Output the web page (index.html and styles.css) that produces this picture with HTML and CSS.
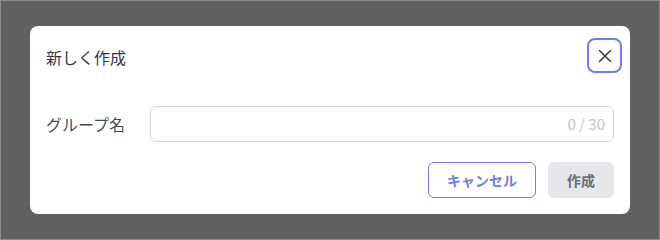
FILE: index.html
```html
<!DOCTYPE html>
<html lang="ja">
<head>
<meta charset="utf-8">
<link rel="stylesheet" href="styles.css">
</head>
<body>
<div class="overlay">
  <div class="dialog">
    <div class="header">
      <h2 class="title">新しく作成</h2>
      <button class="close" aria-label="閉じる">
        <svg width="14" height="14" viewBox="0 0 14 14"><path d="M1.5 1.5 L12.5 12.5 M12.5 1.5 L1.5 12.5" stroke="#3b404a" stroke-width="1.6" stroke-linecap="round" fill="none"/></svg>
      </button>
    </div>
    <div class="row">
      <label class="label">グループ名</label>
      <div class="field">
        <input class="input" type="text">
        <span class="count">0 / 30</span>
      </div>
    </div>
    <div class="actions">
      <button class="btn btn-outline">キャンセル</button>
      <button class="btn btn-disabled">作成</button>
    </div>
  </div>
</div>
</body>
</html>
```
FILE: styles.css
```css
html, body {
  margin: 0;
  padding: 0;
}
body {
  font-family: "Noto Sans CJK JP", "Noto Sans", sans-serif;
}
.overlay {
  height: 240px;
  box-sizing: border-box;
  border: 1px solid #8c8c8c;
  background: #606161;
  padding: 25px 29px;
}
.dialog {
  width: 600px;
  height: 188px;
  box-sizing: border-box;
  background: #fff;
  border-radius: 8px;
  display: flex;
  flex-direction: column;
}
.header {
  display: flex;
  justify-content: space-between;
  align-items: center;
  padding: 12px 8px 0 16px;
}
.title {
  margin: 0;
  font-size: 16px;
  font-weight: 400;
  line-height: 24px;
  color: #333844;
  padding-top: 2px;
}
.close {
  width: 35px;
  height: 35px;
  box-sizing: border-box;
  border: 2px solid #6f7cf5;
  border-radius: 8px;
  background: #fff;
  display: flex;
  align-items: center;
  justify-content: center;
  padding: 0;
}
.close svg { display: block; }
.row {
  display: flex;
  align-items: center;
  padding: 0 16px;
  margin-top: 33px;
}
.label {
  width: 104px;
  flex: none;
  font-size: 16px;
  line-height: 24px;
  color: #474c57;
}
.field {
  flex: 1;
  position: relative;
}
.input {
  display: block;
  width: 100%;
  height: 36px;
  box-sizing: border-box;
  border: 1px solid #d7d8de;
  border-radius: 6px;
  padding: 0 60px 0 12px;
  font-family: inherit;
  font-size: 14px;
  outline: none;
}
.count {
  position: absolute;
  right: 9px;
  top: 0;
  line-height: 36px;
  font-size: 15px;
  color: #c3c4cb;
}
.actions {
  display: flex;
  justify-content: flex-end;
  gap: 12px;
  padding: 0 16px;
  margin-top: 20px;
}
.btn {
  height: 36px;
  box-sizing: border-box;
  border-radius: 6px;
  font-family: inherit;
  font-size: 14px;
  font-weight: 700;
  padding: 0 18px;
  line-height: 34px;
}
.btn-outline {
  width: 108px;
  background: #fff;
  border: 1px solid #6f7cf5;
  color: #6f7cf5;
}
.btn-disabled {
  width: 66px;
  background: #e5e6ea;
  border: 1px solid #e5e6ea;
  color: #6b6e75;
}
```
